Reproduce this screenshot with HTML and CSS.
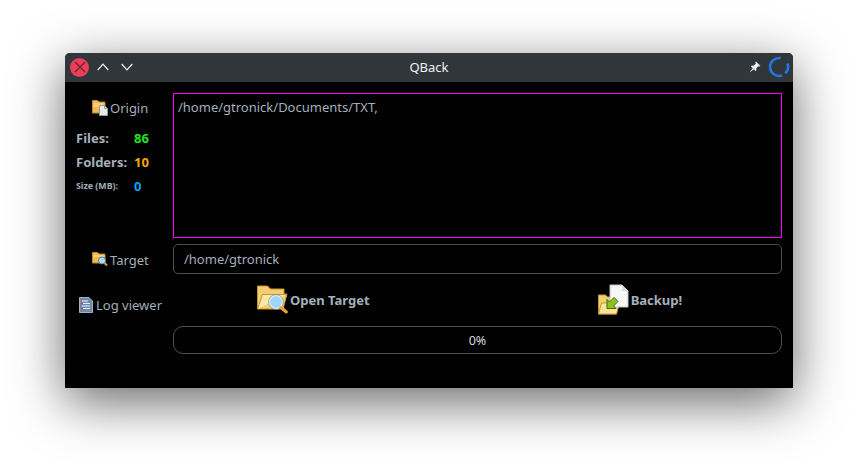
FILE: index.html
```html
<!DOCTYPE html>
<html lang="en">
<head>
<meta charset="utf-8">
<title>QBack</title>
<link rel="stylesheet" href="styles.css">
</head>
<body>
<div class="window">
  <header class="titlebar">
    <div class="tb-left">
      <span class="close"><svg width="12" height="12" viewBox="0 0 12 12"><path d="M1 1L11 11M11 1L1 11" stroke="#6a2230" stroke-width="1.2" fill="none"/></svg></span>
      <svg class="tb-btn" width="12" height="8" viewBox="0 0 12 8"><path d="M.7 7L6 1.2 11.3 7" stroke="#eff0f1" stroke-width="1.2" fill="none"/></svg>
      <svg class="tb-btn tb-down" width="12" height="8" viewBox="0 0 12 8"><path d="M.7 1L6 6.8 11.3 1" stroke="#eff0f1" stroke-width="1.2" fill="none"/></svg>
    </div>
    <div class="title">QBack</div>
    <div class="tb-right">
      <svg width="12" height="12" viewBox="0 0 12 12"><path d="M7 .6L11.4 5 10.4 5.6 9.2 5.2 7.2 7.6 7.4 9.4 6.6 10 2 5.4 2.6 4.6 4.4 4.8 6.8 2.800 6.400 1.600zM3.800 7L.6 11.400 5 8.200z" fill="#eff0f1"/></svg>
      <svg width="22" height="22" viewBox="0 0 22 22"><g fill="none" stroke="#1f78e4" stroke-width="2.600"><path d="M12.500 2.100A9 9 0 1 0 14 19.500"/><path d="M19.300 7.500A9 9 0 0 1 17.300 17.400"/></g></svg>
    </div>
  </header>
  <main class="content">
    <div class="side-top">
      <div class="side-label origin-label">
        <svg width="16" height="16" viewBox="0 0 16 16"><path d="M.5 .5h5l1.500 1.500h6v11H.5z" fill="#eeb94f" stroke="#c08a2c"/><path d="M1.500 4h11M1.500 6h11" stroke="#fbe6a4"/><path d="M7.500 5.500h5l3 3v7h-8z" fill="#e9e9e9" stroke="#9a9a9a"/><path d="M12.500 5.500v3h3" fill="none" stroke="#9a9a9a"/></svg>
        <span>Origin</span>
      </div>
      <dl class="stats">
        <div class="stat"><dt>Files:</dt><dd class="green">86</dd></div>
        <div class="stat"><dt>Folders:</dt><dd class="orange">10</dd></div>
        <div class="stat"><dt class="tiny">Size (MB):</dt><dd class="blue">0</dd></div>
      </dl>
    </div>
    <div class="origin-box">/home/gtronick/Documents/TXT,</div>
    <div class="side-label target-label">
      <svg width="16" height="16" viewBox="0 0 16 16"><path d="M.5 .5h5l1.500 1.500h6v9H.5z" fill="#eeb94f" stroke="#c08a2c"/><path d="M1.500 4h11" stroke="#fbe6a4"/><circle cx="10" cy="8.500" r="3.500" fill="#a9dcf5" stroke="#5d7f95"/><path d="M12.500 11l2.500 2.500" stroke="#e09a30" stroke-width="2"/></svg>
      <span>Target</span>
    </div>
    <div class="target-box">/home/gtronick</div>
    <div class="side-label log-label">
      <svg width="14" height="16" viewBox="0 0 14 16"><path d="M.5.5h9.500l3.500 3.500v11.500H.5z" fill="#6f89a8" stroke="#9fb2c8"/><path d="M3 4h6M3 6.500h8M3 9h8M3 11.500h8" stroke="#eef2f6"/><path d="M2 6.500h2M2 11.500h2" stroke="#d04040"/></svg>
      <span>Log viewer</span>
    </div>
    <div class="actions">
      <div class="action open-action">
        <svg width="31" height="32" viewBox="0 0 31 32"><path d="M.5 2h10l3 3h13.500v5h3l-4 15H.5z" fill="#f3cd72" stroke="#c8962f"/><path d="M.5 25L5.500 10.500H30" fill="#fbe7a6" stroke="#c8962f"/><circle cx="19" cy="18" r="6.500" fill="#9fd6f5" stroke="#dfe7ec" stroke-width="1.600"/><circle cx="19" cy="18" r="7.500" fill="none" stroke="#7f8f98" stroke-width=".7"/><path d="M24 23.500l5.300 4.500" stroke="#eba23a" stroke-width="3" stroke-linecap="round"/></svg>
        <span>Open Target</span>
      </div>
      <div class="action backup-action">
        <svg width="31" height="32" viewBox="0 0 31 32"><path d="M.5 11h7l2 2h9v17H.5z" fill="#f3cf74" stroke="#c8962f"/><path d="M.5 30l3-11h18l-3 11z" fill="#fae39b" stroke="#c8962f"/><path d="M12 1h12l6 6v16H12z" fill="#f7f7f7" stroke="#c4c4c4"/><path d="M24 1v6h6z" fill="#dcdcdc"/><path d="M16 13.500l4 4-4.500 4.500 2.500 2.500H9v-9l2.500 2.500z" fill="#8fc31f" stroke="#3d6e05"/></svg>
        <span>Backup!</span>
      </div>
    </div>
    <div class="progress">0%</div>
  </main>
</div>
</body>
</html>
```

FILE: styles.css
```css
* { box-sizing: border-box; }
html, body { margin: 0; height: 100%; }
body {
  background: #fff;
  padding: 53px 65px 0;
  overflow: hidden;
  font-family: "Noto Sans", sans-serif;
  font-size: 13px;
  color: #a4afba;
}
.window {
  width: 728px;
  height: 335px;
  background: #000;
  border-radius: 5px 5px 0 0;
  box-shadow: 0 14px 52px rgba(0, 0, 0, .6);
  display: flex;
  flex-direction: column;
}
.titlebar {
  height: 29px;
  flex: none;
  background: #31363b;
  border-radius: 5px 5px 0 0;
  display: grid;
  grid-template-columns: 1fr auto 1fr;
  align-items: center;
  padding: 0 3px 1px 5px;
}
.tb-left, .tb-right { display: flex; align-items: center; }
.tb-left { gap: 8px; }
.tb-right { justify-content: flex-end; gap: 7px; }
.close {
  width: 19px;
  height: 19px;
  border-radius: 50%;
  background: #e93d58;
  display: flex;
  align-items: center;
  justify-content: center;
}
.tb-down { margin-left: 4px; }
.title { color: #eff0f1; line-height: 18px; margin-left: -2px; }
.content {
  flex: 1;
  display: grid;
  grid-template-columns: 108px 609px;
  grid-template-rows: 145px 30px 52px 28px;
  padding-top: 11px;
  align-content: start;
}
.side-top { padding-top: 6px; }
.side-label { display: flex; align-items: center; gap: 2px; line-height: 18px; }
.origin-label { padding-left: 27px; }
.stats { margin: 9px 0 0; padding-left: 11px; }
.stat { display: flex; align-items: center; height: 24px; font-weight: 700; }
.stat dt { width: 58px; font-size: 13px; white-space: nowrap; }
.stat dt.tiny { font-size: 8.8px; }
.stat dd { margin: 0; font-size: 13px; }
.green { color: #1fe51f; }
.orange { color: #ffa500; }
.blue { color: #00a2f5; }
.origin-box {
  border: 1px solid #f0f;
  padding: 3px 4px;
  line-height: 20px;
}
.target-box {
  grid-column: 2;
  margin-top: 6px;
  height: 30px;
  border: 1px solid #4f4f4f;
  border-radius: 5px;
  padding: 0 10px;
  line-height: 28px;
}
.target-label { padding-left: 27px; margin-top: 14px; align-self: center; }
.log-label { padding-left: 14px; gap: 3px; margin-top: 22px; align-self: center; }
.actions {
  display: flex;
  align-items: center;
  padding-left: 84px;
  font-weight: 700;
  margin-top: 6px;
  height: 52px;
  gap: 228px;
}
.action { display: flex; align-items: center; gap: 2px; }
.progress {
  grid-column: 2;
  margin-top: 6px;
  height: 28px;
  border: 1px solid #4f4f4f;
  border-radius: 10px;
  text-align: center;
  line-height: 27px;
  font-size: 12.500px;
  color: #d8d8d8;
}
```
